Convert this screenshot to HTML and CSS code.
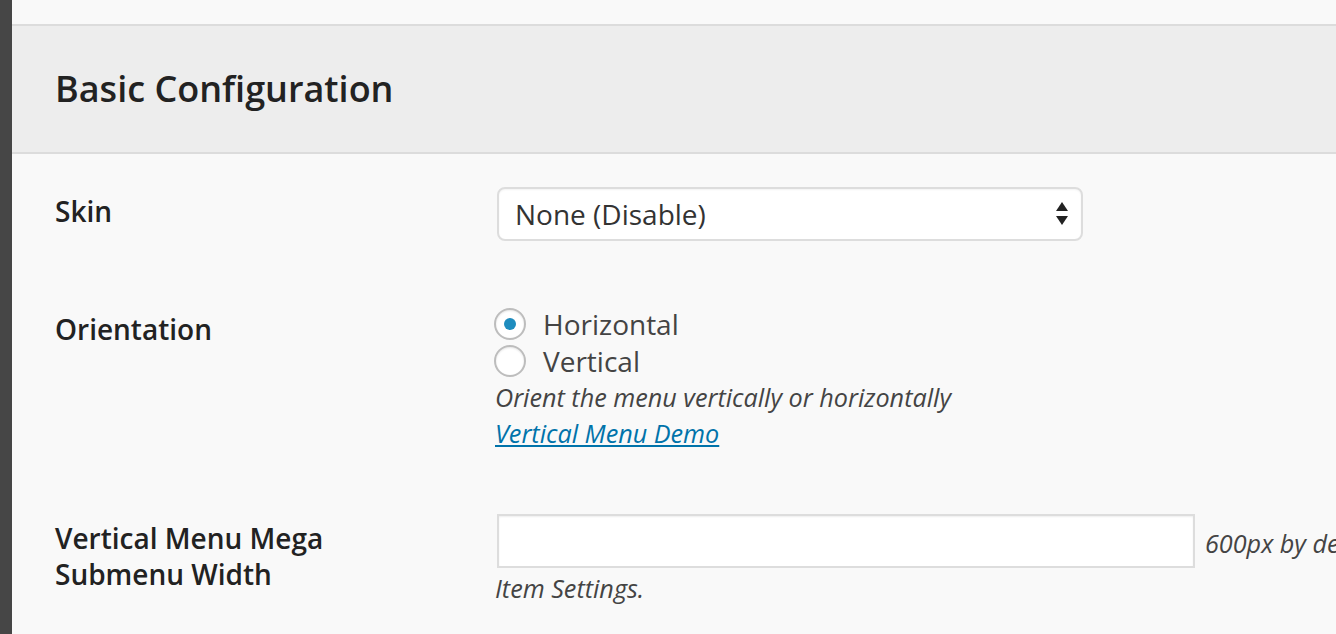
FILE: index.html
```html
<!DOCTYPE html>
<html lang="en">
<head>
<meta charset="utf-8">
<title>Basic Configuration</title>
<link rel="stylesheet" href="styles.css">
</head>
<body>
<div class="wrap">
  <div class="sidebar"></div>
  <div class="main">
    <div class="topstrip"></div>
    <div class="section-head"><h2 class="section-title">Basic Configuration</h2></div>
    <div class="form">
      <div class="row row-skin">
        <div class="label">Skin</div>
        <div class="field">
          <div class="select">
            <span class="select-text">None (Disable)</span>
            <svg class="select-arrows" width="14" height="24" viewBox="0 0 14 24"><path d="M7 0 L13 9 L1 9 Z" fill="#222"/><path d="M1 14 L13 14 L7 23 Z" fill="#222"/></svg>
          </div>
        </div>
      </div>
      <div class="row row-orient">
        <div class="label">Orientation</div>
        <div class="field">
          <div class="radio-line"><span class="radio checked"><span class="radio-dot"></span></span><span class="radio-text">Horizontal</span></div>
          <div class="radio-line"><span class="radio"></span><span class="radio-text">Vertical</span></div>
          <div class="desc">Orient the menu vertically or horizontally</div>
          <div class="desc"><a class="link" href="#">Vertical Menu Demo</a></div>
        </div>
      </div>
      <div class="row row-width">
        <div class="label">Vertical Menu Mega<br>Submenu Width</div>
        <div class="field">
          <div class="input-line"><span class="text-input"></span><span class="desc desc-inline">600px by default.  Set this value if your submenus need to be a different width in the vertical orientation.  Can be overridden in the Menu</span></div>
          <div class="desc desc-after">Item Settings.</div>
        </div>
      </div>
    </div>
  </div>
</div>
</body>
</html>
```

FILE: styles.css
```css
html, body {
  margin: 0;
  padding: 0;
  overflow: hidden;
  background: #f9f9f9;
}
body {
  width: 1336px;
  height: 634px;
  font-family: "Open Sans", "DejaVu Sans", sans-serif;
}
.wrap {
  display: flex;
  height: 634px;
}
.sidebar {
  width: 12px;
  flex: none;
  background: #464646;
}
.main {
  flex: 1;
  min-width: 0;
  overflow: hidden;
}
.topstrip {
  height: 24px;
  background: #f9f9f9;
}
.section-head {
  height: 126px;
  background: #ededed;
  border-top: 2px solid #dcdcdc;
  border-bottom: 2px solid #dcdcdc;
  display: flex;
  align-items: center;
  padding-left: 43px;
}
.section-title {
  margin: 0;
  font-size: 36px;
  font-weight: 600;
  color: #222;
  line-height: 46px;
}
.form {
  padding-left: 43px;
}
.row {
  display: grid;
  grid-template-columns: 440px 1fr;
}
.row-skin { padding-top: 33px; }
.row-orient { padding-top: 64px; }
.row-width { padding-top: 63px; }
.label {
  margin-top: 6px;
  font-size: 28px;
  line-height: 36px;
  font-weight: 600;
  color: #222;
}
.field {
  min-width: 0;
}
.select {
  margin-left: 2px;
  width: 586px;
  height: 54px;
  box-sizing: border-box;
  background: #fff;
  border: 2px solid #dddddd;
  border-radius: 8px;
  box-shadow: inset 0 1px 2px rgba(0,0,0,0.05);
  display: flex;
  align-items: center;
  justify-content: space-between;
  padding: 0 12px 0 16px;
}
.select-text {
  font-size: 28px;
  color: #333;
  line-height: 36px;
}
.radio-line {
  display: flex;
  align-items: center;
  height: 37px;
  margin-left: -1px;
}
.radio {
  width: 32px;
  height: 32px;
  box-sizing: border-box;
  border: 2px solid #bdbdbd;
  border-radius: 50%;
  background: #fff;
  box-shadow: inset 0 1px 2px rgba(0,0,0,0.1);
  display: flex;
  align-items: center;
  justify-content: center;
  flex: none;
}
.radio-dot {
  width: 12px;
  height: 12px;
  border-radius: 50%;
  background: #1e8cbe;
}
.radio-text {
  margin-left: 17px;
  font-size: 28px;
  line-height: 36px;
  color: #444;
}
.desc {
  font-size: 25.2px;
  line-height: 36px;
  font-style: italic;
  color: #444;
  white-space: nowrap;
}
.link {
  color: #0073aa;
  text-decoration: underline;
}
.input-line {
  display: flex;
  align-items: center;
}
.text-input {
  flex: none;
  margin-left: 2px;
  width: 698px;
  height: 54px;
  box-sizing: border-box;
  border: 2px solid #dddddd;
  background: #fff;
  box-shadow: inset 0 1px 2px rgba(0,0,0,0.07);
}
.desc-inline {
  margin-left: 10px;
  margin-top: 4px;
}
.desc-after {
  margin-top: 2px;
}
```
